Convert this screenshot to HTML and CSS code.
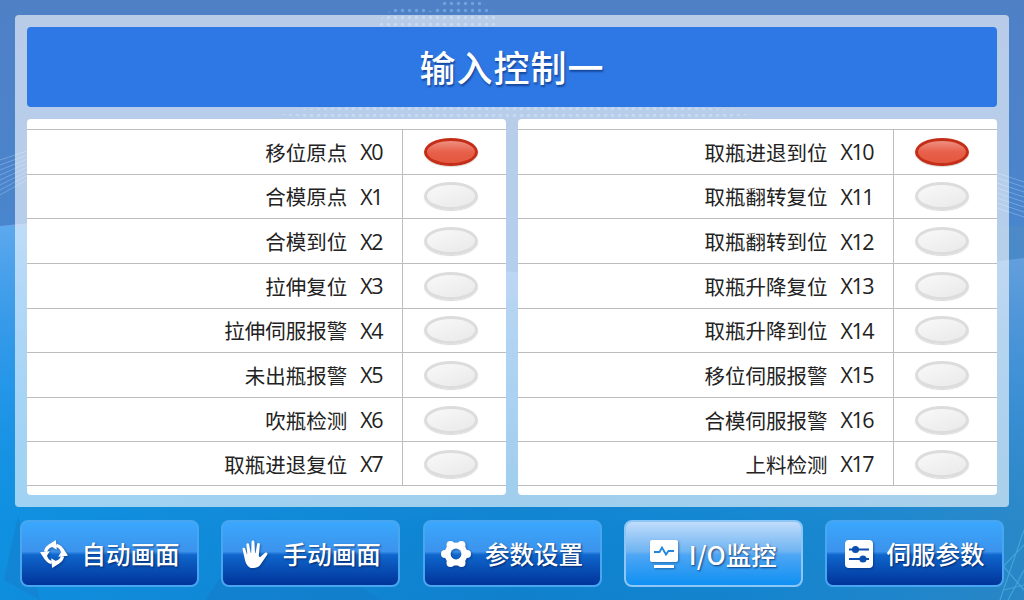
FILE: index.html
```html
<!DOCTYPE html>
<html lang="zh-CN">
<head>
<meta charset="utf-8">
<title>输入控制一</title>
<link rel="stylesheet" href="styles.css">
</head>
<body>
<div class="screen">
  <svg class="decor" viewBox="0 0 1024 600" aria-hidden="true">
    <defs>
      <pattern id="dots" width="7" height="7" patternUnits="userSpaceOnUse"><circle cx="3.500" cy="3.500" r="1.700" fill="#8cc0f0"/></pattern>
      <linearGradient id="wave" x1="0" y1="0" x2="0" y2="1"><stop offset="0" stop-color="#9cc8ff" stop-opacity=".45"/><stop offset="1" stop-color="#2a90f0" stop-opacity="0"/></linearGradient>
      <linearGradient id="side" x1="0" y1="0" x2="1" y2="0"><stop offset="0" stop-color="#0f9cf0" stop-opacity=".5"/><stop offset=".5" stop-color="#0f9cf0" stop-opacity="0"/><stop offset="1" stop-color="#5a90b8" stop-opacity=".35"/></linearGradient>
    </defs>
    <rect y="226" width="1024" height="374" fill="url(#side)"/>
    <path d="M0 226C200 200 500 330 1024 258V460C640 500 300 420 0 450Z" fill="url(#wave)"/>
    <g fill="url(#dots)" opacity=".55">
      <ellipse cx="410" cy="28" rx="32" ry="22"/>
      <ellipse cx="462" cy="22" rx="34" ry="24"/>
      <ellipse cx="515" cy="113" rx="240" ry="8"/>
    </g>
    <g fill="none" stroke="#a8d0f4" stroke-width=".7" opacity=".6">
      <path d="M0 160L30 150M0 165L30 154M0 170L30 158M0 175L30 162M0 180L30 166M0 185L30 170M0 190L30 174M0 195L30 178"/>
      <path d="M994 172L1024 182M994 177L1024 187M994 182L1024 192M994 187L1024 197M994 192L1024 202M994 197L1024 207M994 202L1024 212M994 207L1024 217"/>
    </g>
    <g fill="none" stroke="#4cb0e0" stroke-width="1.200" opacity=".7">
      <path d="M1000 600L1024 530M1008 600L1024 570M995 575L1024 545M1004 590L1024 585M998 560L1024 590"/>
    </g>
    <g fill="#1676c4" opacity=".35">
      <path d="M4 580L18 515 40 600Z"/>
      <path d="M205 600L260 520 380 600Z"/>
    </g>
  </svg>
  <main class="panel">
    <h1 class="title">输入控制一</h1>
    <div class="cards">
      <section class="card">
        <div class="row"><div class="label"><span>移位原点</span><span class="code">X0</span></div><div class="cell"><i class="lamp on"></i></div></div>
        <div class="row"><div class="label"><span>合模原点</span><span class="code">X1</span></div><div class="cell"><i class="lamp"></i></div></div>
        <div class="row"><div class="label"><span>合模到位</span><span class="code">X2</span></div><div class="cell"><i class="lamp"></i></div></div>
        <div class="row"><div class="label"><span>拉伸复位</span><span class="code">X3</span></div><div class="cell"><i class="lamp"></i></div></div>
        <div class="row"><div class="label"><span>拉伸伺服报警</span><span class="code">X4</span></div><div class="cell"><i class="lamp"></i></div></div>
        <div class="row"><div class="label"><span>未出瓶报警</span><span class="code">X5</span></div><div class="cell"><i class="lamp"></i></div></div>
        <div class="row"><div class="label"><span>吹瓶检测</span><span class="code">X6</span></div><div class="cell"><i class="lamp"></i></div></div>
        <div class="row"><div class="label"><span>取瓶进退复位</span><span class="code">X7</span></div><div class="cell"><i class="lamp"></i></div></div>
      </section>
      <section class="card">
        <div class="row"><div class="label"><span>取瓶进退到位</span><span class="code">X10</span></div><div class="cell"><i class="lamp on"></i></div></div>
        <div class="row"><div class="label"><span>取瓶翻转复位</span><span class="code">X11</span></div><div class="cell"><i class="lamp"></i></div></div>
        <div class="row"><div class="label"><span>取瓶翻转到位</span><span class="code">X12</span></div><div class="cell"><i class="lamp"></i></div></div>
        <div class="row"><div class="label"><span>取瓶升降复位</span><span class="code">X13</span></div><div class="cell"><i class="lamp"></i></div></div>
        <div class="row"><div class="label"><span>取瓶升降到位</span><span class="code">X14</span></div><div class="cell"><i class="lamp"></i></div></div>
        <div class="row"><div class="label"><span>移位伺服报警</span><span class="code">X15</span></div><div class="cell"><i class="lamp"></i></div></div>
        <div class="row"><div class="label"><span>合模伺服报警</span><span class="code">X16</span></div><div class="cell"><i class="lamp"></i></div></div>
        <div class="row"><div class="label"><span>上料检测</span><span class="code">X17</span></div><div class="cell"><i class="lamp"></i></div></div>
      </section>
    </div>
  </main>
  <nav class="nav">
    <a class="btn">
      <svg class="ico" viewBox="0 0 30 30">
        <defs><g id="seg"><path d="M24.360 13.350A9.500 9.500 0 0 0 17.460 5.820" fill="none" stroke="#fff" stroke-width="3.600"/><path d="M17 0L18 10.500 9 5Z" fill="#fff"/></g></defs>
        <use href="#seg"/><use href="#seg" transform="rotate(90 15 15)"/><use href="#seg" transform="rotate(180 15 15)"/><use href="#seg" transform="rotate(270 15 15)"/>
      </svg>
      <span>自动画面</span>
    </a>
    <a class="btn">
      <svg class="ico" viewBox="0 0 28 28"><path fill="#fff" d="M8.600 27.400C5.600 25.600 4.400 22.400 3.600 18.600L1.600 9.400C1.300 7.600 3.600 7 4.200 8.800L5.900 14.100 6.300 14 5.400 4.800C5.300 2.900 7.700 2.600 8.100 4.500L9.700 12.800 10.200 12.800 10.600 1.800C10.700-.1 13.300-.1 13.400 1.800L14 12.800 14.500 12.900 16.200 4.200C16.600 2.400 19 2.800 18.800 4.700L17.800 15.600C17.800 17 18.800 17.500 19.800 16.500L23.800 12.900C25.600 11.500 27.400 13.200 26 15L20.600 23C18.600 26.400 16.400 27.900 13 27.900 11.200 27.900 9.800 28 8.600 27.400Z"/></svg>
      <span>手动画面</span>
    </a>
    <a class="btn">
      <svg class="ico gear" viewBox="0 0 30 28">
        <defs><mask id="hole"><rect width="30" height="28" fill="#fff"/><circle cx="15" cy="14" r="5.400" fill="#000"/></mask></defs>
        <g fill="#fff" mask="url(#hole)">
          <circle cx="15" cy="14" r="11.500"/>
          <circle cx="9.500" cy="5" r="4"/><circle cx="20.500" cy="5" r="4"/>
          <circle cx="26" cy="14" r="4"/><circle cx="4" cy="14" r="4"/>
          <circle cx="9.500" cy="23" r="4"/><circle cx="20.500" cy="23" r="4"/>
        </g>
      </svg>
      <span>参数设置</span>
    </a>
    <a class="btn active">
      <svg class="ico" viewBox="0 0 28 28"><path fill="#fff" fill-rule="evenodd" d="M2 0H26A2 2 0 0 1 28 2V20A2 2 0 0 1 26 22H2A2 2 0 0 1 0 20V2A2 2 0 0 1 2 0ZM4 25H24V28H4Z"/><path fill="none" stroke="#1f86e0" stroke-width="1.800" d="M4 12H9.500L12 7.500 16 14.500 18.500 11H24"/></svg>
      <span class="wide">I/O监控</span>
    </a>
    <a class="btn">
      <svg class="ico" viewBox="0 0 28 28"><rect width="28" height="28" rx="4" fill="#fff"/><g fill="none" stroke="#0a4fb0" stroke-width="2"><path d="M4 9.500H24M4 19H24"/><circle cx="10.500" cy="9.500" r="2.600" fill="#0a4fb0"/><circle cx="18" cy="19" r="2.600" fill="#0a4fb0"/></g></svg>
      <span>伺服参数</span>
    </a>
  </nav>
</div>
</body>
</html>
```
FILE: styles.css
```css
* { box-sizing: border-box; }
html, body { margin: 0; padding: 0; }
body {
  width: 1024px;
  height: 600px;
  overflow: hidden;
  font-family: "Noto Sans CJK SC", "Noto Sans", sans-serif;
}
.screen {
  position: relative;
  width: 1024px;
  height: 600px;
  padding: 15px 15px 0;
  display: flex;
  flex-direction: column;
  background: linear-gradient(180deg, #4f80c6 0%, #4a85cc 35%, #2a8cdc 65%, #0f84d0 88%, #1080cc 100%);
}
.decor {
  position: absolute;
  left: 0;
  top: 0;
  width: 1024px;
  height: 600px;
}
.panel {
  position: relative;
  height: 492px;
  padding: 12px;
  border-radius: 4px;
  background: rgba(255, 255, 255, .6);
}
.title {
  margin: 0;
  height: 80px;
  border-radius: 4px;
  background: #2e78e6;
  color: #fff;
  font-size: 36px;
  font-weight: 500;
  letter-spacing: 1px;
  line-height: 78px;
  text-align: center;
  text-shadow: 1px 2px 2px rgba(0, 30, 90, .55);
}
.cards {
  margin-top: 12px;
  display: grid;
  grid-template-columns: 479px 479px;
  gap: 12px;
  height: 376px;
}
.card {
  padding: 10px 0 9px;
  background: #fff;
  border-radius: 4px;
  display: grid;
  grid-template-rows: repeat(8, 1fr);
}
.row {
  display: grid;
  grid-template-columns: 376px 1fr;
  border-top: 1px solid #bdbdbd;
}
.row:last-child { border-bottom: 1px solid #bdbdbd; }
.label {
  display: flex;
  align-items: center;
  justify-content: flex-end;
  padding-right: 20px;
  border-right: 1px solid #bdbdbd;
  color: #222;
  font-size: 20.500px;
}
.code {
  margin-left: 13px;
  font-size: 21.500px;
  letter-spacing: -1.500px;
  font-family: "Open Sans", "Noto Sans", sans-serif;
}
.cell {
  display: flex;
  align-items: center;
  justify-content: center;
  padding-right: 8px;
}
.lamp {
  display: block;
  width: 54px;
  height: 28px;
  border-radius: 50%;
  background: linear-gradient(160deg, #f9f9f9 0%, #f0f0f0 55%, #e8e9e8 100%);
  border: 3px solid #dcdcdc;
  box-shadow: 0 1px 1px rgba(0, 0, 0, .15);
}
.lamp.on {
  background: linear-gradient(180deg, #ee9080 0%, #e8604a 50%, #e2573f 100%);
  border-color: #c42e18;
}
.nav {
  position: relative;
  flex: 1;
  margin: 0 -10px 0 5px;
  width: 984px;
  padding: 13px 0;
  display: flex;
  justify-content: space-between;
}
.btn {
  width: 179px;
  height: 67px;
  display: flex;
  align-items: center;
  justify-content: center;
  gap: 14px;
  border: 2px solid #48a6f0;
  border-radius: 8px;
  color: #fff;
  font-size: 24.500px;
  font-weight: 500;
  text-shadow: 1px 1px 2px rgba(0, 20, 70, .7);
  background: linear-gradient(180deg, #3aa8fd 0%, #3c92ec 47%, #0f66cc 52%, #00349a 100%);
}
.btn.active {
  gap: 11px;
  border-color: #8cc6f6;
  background: linear-gradient(180deg, #c0dcfb 0%, #6eb4f2 47%, #4ea6f4 52%, #0f90f2 100%);
}
.ico {
  width: 28px;
  height: 28px;
  flex: none;
  filter: drop-shadow(1px 1px 1px rgba(0, 20, 70, .4));
}
.gear { width: 30px; }
.wide { font-size: 25.500px; }
```
